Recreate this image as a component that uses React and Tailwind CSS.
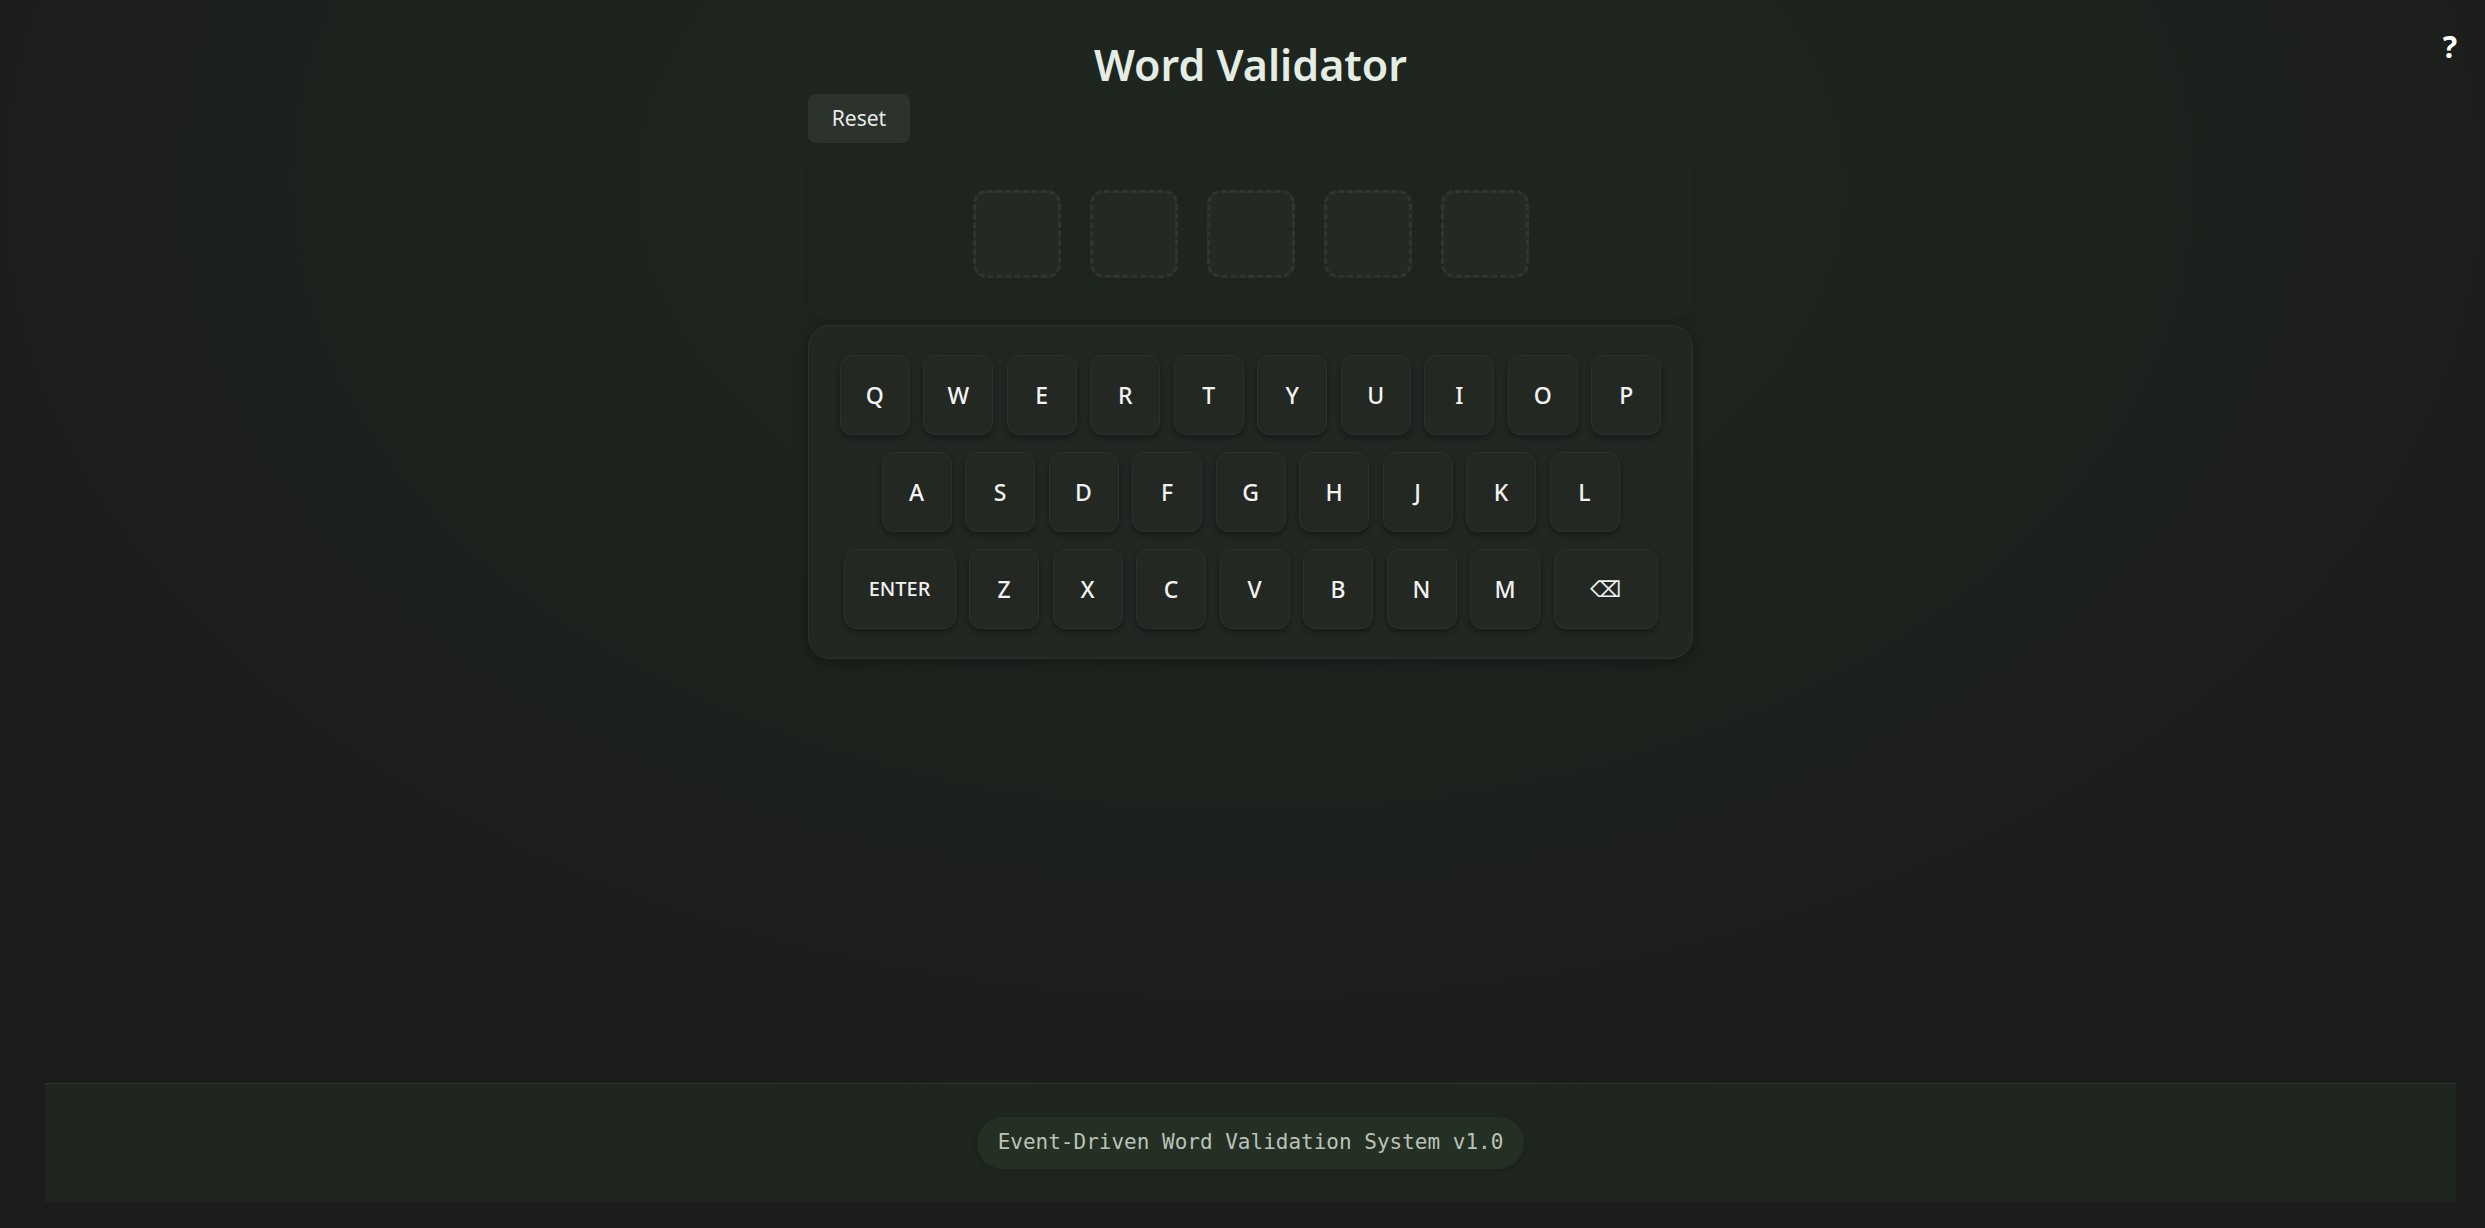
const rows = [
  ['Q', 'W', 'E', 'R', 'T', 'Y', 'U', 'I', 'O', 'P'],
  ['A', 'S', 'D', 'F', 'G', 'H', 'J', 'K', 'L'],
  ['ENTER', 'Z', 'X', 'C', 'V', 'B', 'N', 'M', 'BACK'],
]

function Key({ k }) {
  if (k === 'ENTER') {
    return (
      <button className="w-[112px] h-[80px] rounded-[12px] bg-[#232823] border border-[#2c312c] shadow-[0_3px_6px_rgba(0,0,0,0.35)] text-[#f2f2f2] text-[20px] font-medium flex items-center justify-center">
        ENTER
      </button>
    )
  }
  if (k === 'BACK') {
    return (
      <button className="w-[104px] h-[80px] rounded-[12px] bg-[#232823] border border-[#2c312c] shadow-[0_3px_6px_rgba(0,0,0,0.35)] text-[#f2f2f2] text-[22px] flex items-center justify-center font-['DejaVu_Sans',sans-serif]">
        ⌫
      </button>
    )
  }
  return (
    <button className="w-[70px] h-[80px] rounded-[12px] bg-[#232823] border border-[#2c312c] shadow-[0_3px_6px_rgba(0,0,0,0.35)] text-[#f2f2f2] text-[23px] font-medium flex items-center justify-center">
      {k}
    </button>
  )
}

export default function App() {
  return (
    <div className="relative h-[1228px] w-full flex flex-col pl-[16px] bg-[#1c1c1c] bg-[radial-gradient(ellipse_60%_80%_at_50%_15%,#1f261f_0%,#1d221d_60%,#1c1c1c_100%)] font-['Noto_Sans','Open_Sans',sans-serif] overflow-hidden">
      <div className="absolute right-[28px] top-[32px] text-[30px] font-bold text-white leading-none">?</div>

      <main className="flex-1 flex flex-col items-center">
        <div className="w-[885px] flex flex-col">
          <h1 className="mt-[40px] text-center text-[43px] leading-[50px] font-semibold text-[#e4ede4]">
            Word Validator
          </h1>

          <div className="mt-[4px]">
            <button className="h-[49px] w-[102px] rounded-[8px] bg-[#2c322c] text-[#e8ece8] text-[21px]">
              Reset
            </button>
          </div>

          <div className="mt-[4px] h-[173px] rounded-[18px] bg-[#1e241e] shadow-[0_2px_6px_rgba(0,0,0,0.1)] flex items-center justify-center gap-[29px]">
            {[0, 1, 2, 3, 4].map((i) => (
              <div
                key={i}
                className="w-[88px] h-[88px] rounded-[14px] border-[3px] border-dashed border-[#313531] bg-[#242924]"
              />
            ))}
          </div>

          <div className="mt-[5px] rounded-[22px] bg-[#222722] border border-[#2d322d] shadow-[0_4px_14px_rgba(0,0,0,0.3)] px-[29px] py-[29px] flex flex-col gap-[17px]">
            {rows.map((row, i) => (
              <div key={i} className="flex justify-center gap-[13.5px]">
                {row.map((k) => (
                  <Key key={k} k={k} />
                ))}
              </div>
            ))}
          </div>
        </div>
      </main>

      <footer className="mx-[29px] mb-[26px] h-[119px] border-t border-[#2e392e] bg-[#1f261f] flex items-center justify-center">
        <div className="h-[52px] px-[21px] rounded-full bg-[#243024] flex items-center text-[#b9c2b9] text-[21px] font-['DejaVu_Sans_Mono',monospace] shadow-[0_2px_6px_rgba(0,0,0,0.2)]">
          Event-Driven Word Validation System v1.0
        </div>
      </footer>
    </div>
  )
}
